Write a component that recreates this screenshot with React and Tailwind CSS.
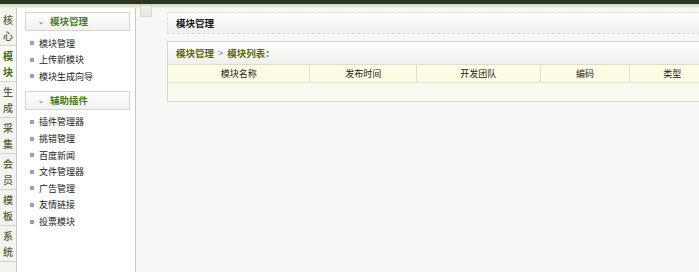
import React from 'react';

const tabs = ['核心', '模块', '生成', '采集', '会员', '模板', '系统'];

const groups = [
  { title: '模块管理', items: ['模块管理', '上传新模块', '模块生成向导'] },
  { title: '辅助插件', items: ['插件管理器', '挑错管理', '百度新闻', '文件管理器', '广告管理', '友情链接', '投票模块'] },
];

const cols = [
  { name: '模块名称', w: 'w-[143px]' },
  { name: '发布时间', w: 'w-[107px]' },
  { name: '开发团队', w: 'w-[124px]' },
  { name: '编码', w: 'w-[90px]' },
  { name: '类型', w: 'w-[84px]' },
];

function App() {
  return (
    <div className="w-[699px] h-[272px] overflow-hidden bg-[#f7f7f5] flex flex-col font-['SimSun','Noto_Sans_CJK_SC',sans-serif] text-[9px] text-[#222]">
      {/* 顶部条 */}
      <div className="h-[4px] bg-[#2c3524] shrink-0"></div>
      <div className="h-[4px] bg-gradient-to-b from-[#c9d9b0] to-[#eef4e4] shrink-0"></div>

      <div className="flex flex-1 min-h-0">
        {/* 左侧竖排标签 */}
        <div className="w-[17px] shrink-0 bg-[#f3f3ef] border-r border-[#c8c8c0] pt-[2px]">
          {tabs.map((t, i) => (
            <div
              key={t}
              className={`h-[36px] border-b border-[#d4d4cc] flex flex-col items-center justify-center leading-[16px] text-[10px] ${
                i === 1 ? 'bg-[#fbfcf4] text-[#3f6b10] font-bold' : 'text-[#55603e] font-medium'
              }`}
            >
              <span>{t[0]}</span>
              <span>{t[1]}</span>
            </div>
          ))}
        </div>

        {/* 菜单 */}
        <div className="w-[119px] shrink-0 bg-white border-r border-[#c8c8c0] pt-[4px] pl-[8px] pr-[5px]">
          {groups.map((g, gi) => (
            <div key={g.title} className={gi > 0 ? 'mt-[6px]' : ''}>
              <div className="h-[19px] border border-[#d6d6d0] bg-gradient-to-b from-white to-[#f1f1ee] flex items-center pl-[12px] text-[#4f7a1e] font-bold text-[9.5px]">
                <span className="text-[#8a9a70] text-[7px] mr-[6px]">⌄</span>
                {g.title}
              </div>
              <div className="pt-[4px] pl-[5px]">
                {g.items.map((it) => (
                  <div key={it} className="h-[16.6px] flex items-center">
                    <span className="w-[4px] h-[4px] bg-[#9bb0cc] border border-[#7a90b4] rounded-[1px] mr-[5px]"></span>
                    {it}
                  </div>
                ))}
              </div>
            </div>
          ))}
        </div>

        {/* 主区域 */}
        <div className="flex-1 flex min-w-0">
          <div className="w-[31px] shrink-0 pl-[4px]">
            <div className="w-[12px] h-[12px] -mt-[3px] border border-[#d8d8d0] bg-gradient-to-b from-[#f4f4ee] to-[#e6e6de]"></div>
          </div>
          <div className="w-[548px] shrink-0 pt-[4px]">
            <div className="h-[22px] border border-dashed border-[#dcdcd4] bg-gradient-to-b from-white to-[#eeeeec] flex items-center pl-[8px] font-bold text-[9.5px] text-[#111]">
              模块管理
            </div>
            <div className="mt-[7px] border border-[#d6d6d0] bg-white">
              <div className="h-[23px] bg-gradient-to-b from-white to-[#efefed] border-b border-[#dcdcd4] flex items-center pl-[8px] font-bold text-[9.5px] text-[#5e6600]">
                模块管理
                <span className="font-normal text-[#888] mx-[4px]">&gt;</span>
                模块列表：
              </div>
              <div className="flex h-[18px] bg-[#fdfbe2] border-b border-[#e2e2d8]">
                {cols.map((c, i) => (
                  <div
                    key={c.name}
                    className={`${c.w} flex items-center justify-center ${i < cols.length - 1 ? 'border-r border-[#e0dfcc]' : ''}`}
                  >
                    {c.name}
                  </div>
                ))}
              </div>
              <div className="h-[18px] bg-[#fafbf0]"></div>
            </div>
          </div>
        </div>
      </div>
    </div>
  );
}

export default App;
